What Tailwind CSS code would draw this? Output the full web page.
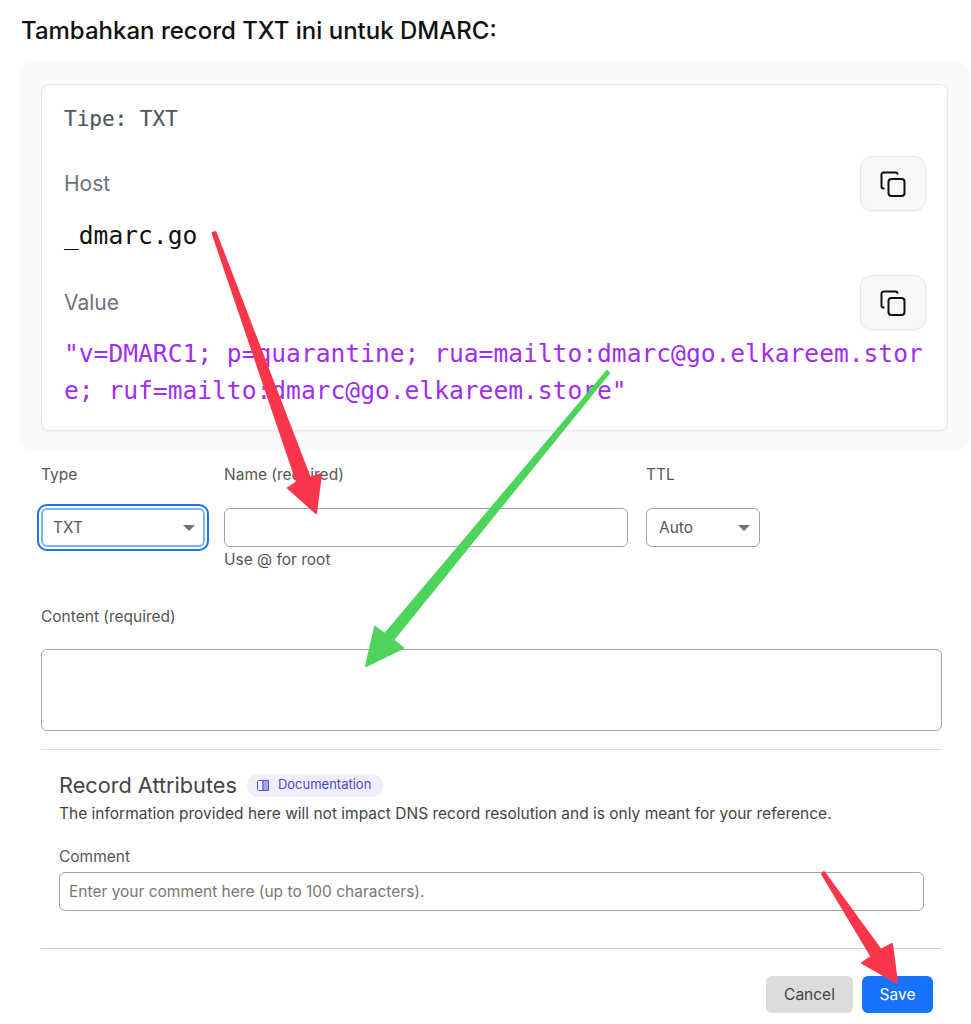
<!DOCTYPE html>
<html lang="en">
<head>
  <meta charset="UTF-8" />
  <title>DMARC record</title>
  <script src="https://cdn.jsdelivr.net/npm/@tailwindcss/browser@4"></script>
</head>
<body class="bg-white font-['Inter',sans-serif]">
<div class="relative w-[971px] h-[1024px] overflow-hidden">

  <!-- Instruction -->
  <h1 class="pt-[15px] pl-[21px] text-[24px] leading-[32px] font-medium text-[#111]">Tambahkan record TXT ini untuk DMARC:</h1>

  <!-- Record panel -->
  <section class="mt-[15px] ml-[20px] w-[949px] bg-[#f9fafb] rounded-xl pt-[22px] pb-[19px] pl-[21px] pr-[21px]">
    <div class="bg-white border border-[#e5e7eb] rounded-lg shadow-xs pt-[18px] pb-[21px] pl-[22px] pr-[21px]">
      <p class="font-['DejaVu_Sans_Mono',monospace] text-[21px] leading-[32px] text-[#4b5563] [-webkit-text-stroke:0.15px_#4b5563]">Tipe: TXT</p>

      <div class="mt-[21px] flex items-center justify-between h-[55px]">
        <span class="text-[21px] text-[#6b7280]">Host</span>
        <button class="w-[66px] h-[55px] flex items-center justify-center bg-[#f7f7f7] border border-[#e5e7eb] rounded-xl shadow-xs">
          <svg width="28" height="28" viewBox="0 0 28 28" fill="none" stroke="#111" stroke-width="2"><path d="M18.5 4.5a2 2 0 0 0-2-2h-12a2 2 0 0 0-2 2v12a2 2 0 0 0 2 2h1"/><rect x="9.5" y="9" width="16" height="17" rx="3"/></svg>
        </button>
      </div>
      <p class="mt-[6px] font-['DejaVu_Sans_Mono',monospace] text-[24.6px] leading-[37px] text-[#111]">_dmarc.go</p>

      <div class="mt-[21px] flex items-center justify-between h-[55px]">
        <span class="text-[21px] text-[#6b7280]">Value</span>
        <button class="w-[66px] h-[55px] flex items-center justify-center bg-[#f7f7f7] border border-[#e5e7eb] rounded-xl shadow-xs">
          <svg width="28" height="28" viewBox="0 0 28 28" fill="none" stroke="#111" stroke-width="2"><path d="M18.5 4.5a2 2 0 0 0-2-2h-12a2 2 0 0 0-2 2v12a2 2 0 0 0 2 2h1"/><rect x="9.5" y="9" width="16" height="17" rx="3"/></svg>
        </button>
      </div>
      <p class="mt-[5px] font-['DejaVu_Sans_Mono',monospace] text-[24.6px] leading-[37px] text-[#9f2ef5] break-all">"v=DMARC1; p=quarantine; rua=mailto:dmarc@go.elkareem.store; ruf=mailto:dmarc@go.elkareem.store"</p>
    </div>
  </section>

  <!-- DNS form -->
  <form class="ml-[41px] w-[901px] text-[15.5px] text-[#555]">
    <div class="mt-[15px] flex">
      <div class="w-[164px] mr-[19px]">
        <label class="block leading-[20px]">Type</label>
        <div class="mt-[23px] h-[39px] flex items-center justify-between pl-[10px] pr-[8px] border-2 border-[#7fb2ff] rounded-md outline-2 outline-offset-2 outline-[#1a73f5]">
          <span>TXT</span>
          <svg width="12" height="6" viewBox="0 0 12 6" fill="#6b7280"><path d="M0 0h12L6 6z"/></svg>
        </div>
      </div>
      <div class="w-[404px] mr-[18px]">
        <label class="block leading-[20px]">Name (required)</label>
        <input class="block mt-[23px] w-full h-[39px] border border-[#a3a3a3] rounded-md bg-white" />
        <p class="mt-[3px] leading-[20px]">Use @ for root</p>
      </div>
      <div class="w-[114px]">
        <label class="block leading-[20px]">TTL</label>
        <div class="mt-[23px] h-[39px] flex items-center justify-between pl-[12px] pr-[9px] border border-[#a3a3a3] rounded-md">
          <span>Auto</span>
          <svg width="12" height="6" viewBox="0 0 12 6" fill="#6b7280"><path d="M0 0h12L6 6z"/></svg>
        </div>
      </div>
    </div>

    <label class="block mt-[37px] leading-[20px]">Content (required)</label>
    <textarea class="block mt-[22px] w-full h-[82px] border border-[#a3a3a3] rounded-md bg-white resize-none"></textarea>

    <hr class="mt-[18px] border-t border-[#ddd]" />

    <!-- Record attributes -->
    <div class="pl-[18px] pr-[18px]">
      <div class="mt-[23px] flex items-center h-[24px]">
        <h2 class="text-[21.7px] leading-[24px] text-[#444]">Record Attributes</h2>
        <span class="ml-[10px] h-[23px] w-[136px] flex items-center pl-[10px] gap-[9px] rounded-full bg-[#efeffc] text-[13px] text-[#4f46c8]">
          <svg width="12" height="11" viewBox="0 0 12 11" fill="none" stroke="#5b5bd6" stroke-width="1"><rect x="0.5" y="0.5" width="11" height="10" rx="1"/><path d="M6 0.5v10"/><path d="M6 0.5h5.5v10H6z" fill="#a5a5ee"/></svg>
          Documentation
        </span>
      </div>
      <p class="mt-[7px] leading-[20px] text-[#444] whitespace-nowrap">The information provided here will not impact DNS record resolution and is only meant for your reference.</p>
      <label class="block mt-[23px] leading-[20px]">Comment</label>
      <input placeholder="Enter your comment here (up to 100 characters)." class="block mt-[5px] w-[865px] h-[39px] px-[9px] border border-[#a3a3a3] rounded-md bg-white placeholder:text-[#777]" />
    </div>

    <hr class="mt-[37px] border-t border-[#ccc]" />

    <div class="mt-[27px] flex justify-end gap-[9px] pr-[9px]">
      <button type="button" class="w-[87px] h-[37px] rounded-md bg-[#dcdcdc] text-[#444]">Cancel</button>
      <button type="button" class="w-[71px] h-[37px] rounded-md bg-[#1673ff] text-white">Save</button>
    </div>
  </form>

  <!-- Annotation arrows -->
  <svg class="absolute inset-0 pointer-events-none" width="971" height="1024" viewBox="0 0 971 1024">
    <g fill="#f9364b" stroke="#f9364b" stroke-width="2" stroke-linejoin="round">
      <polygon points="212.5,233 215.5,232 310,478 321,474 316,513 288,488 297,482"/>
      <polygon points="822,874 824,872 881,950 892,944 897,983 862,963 871.5,956.5"/>
    </g>
    <polygon fill="#4cd55a" stroke="#4cd55a" stroke-width="2" stroke-linejoin="round" points="607,371 609,373 393,640 403,648 366,666 375,627 385,634"/>
  </svg>
</div>
</body>
</html>
